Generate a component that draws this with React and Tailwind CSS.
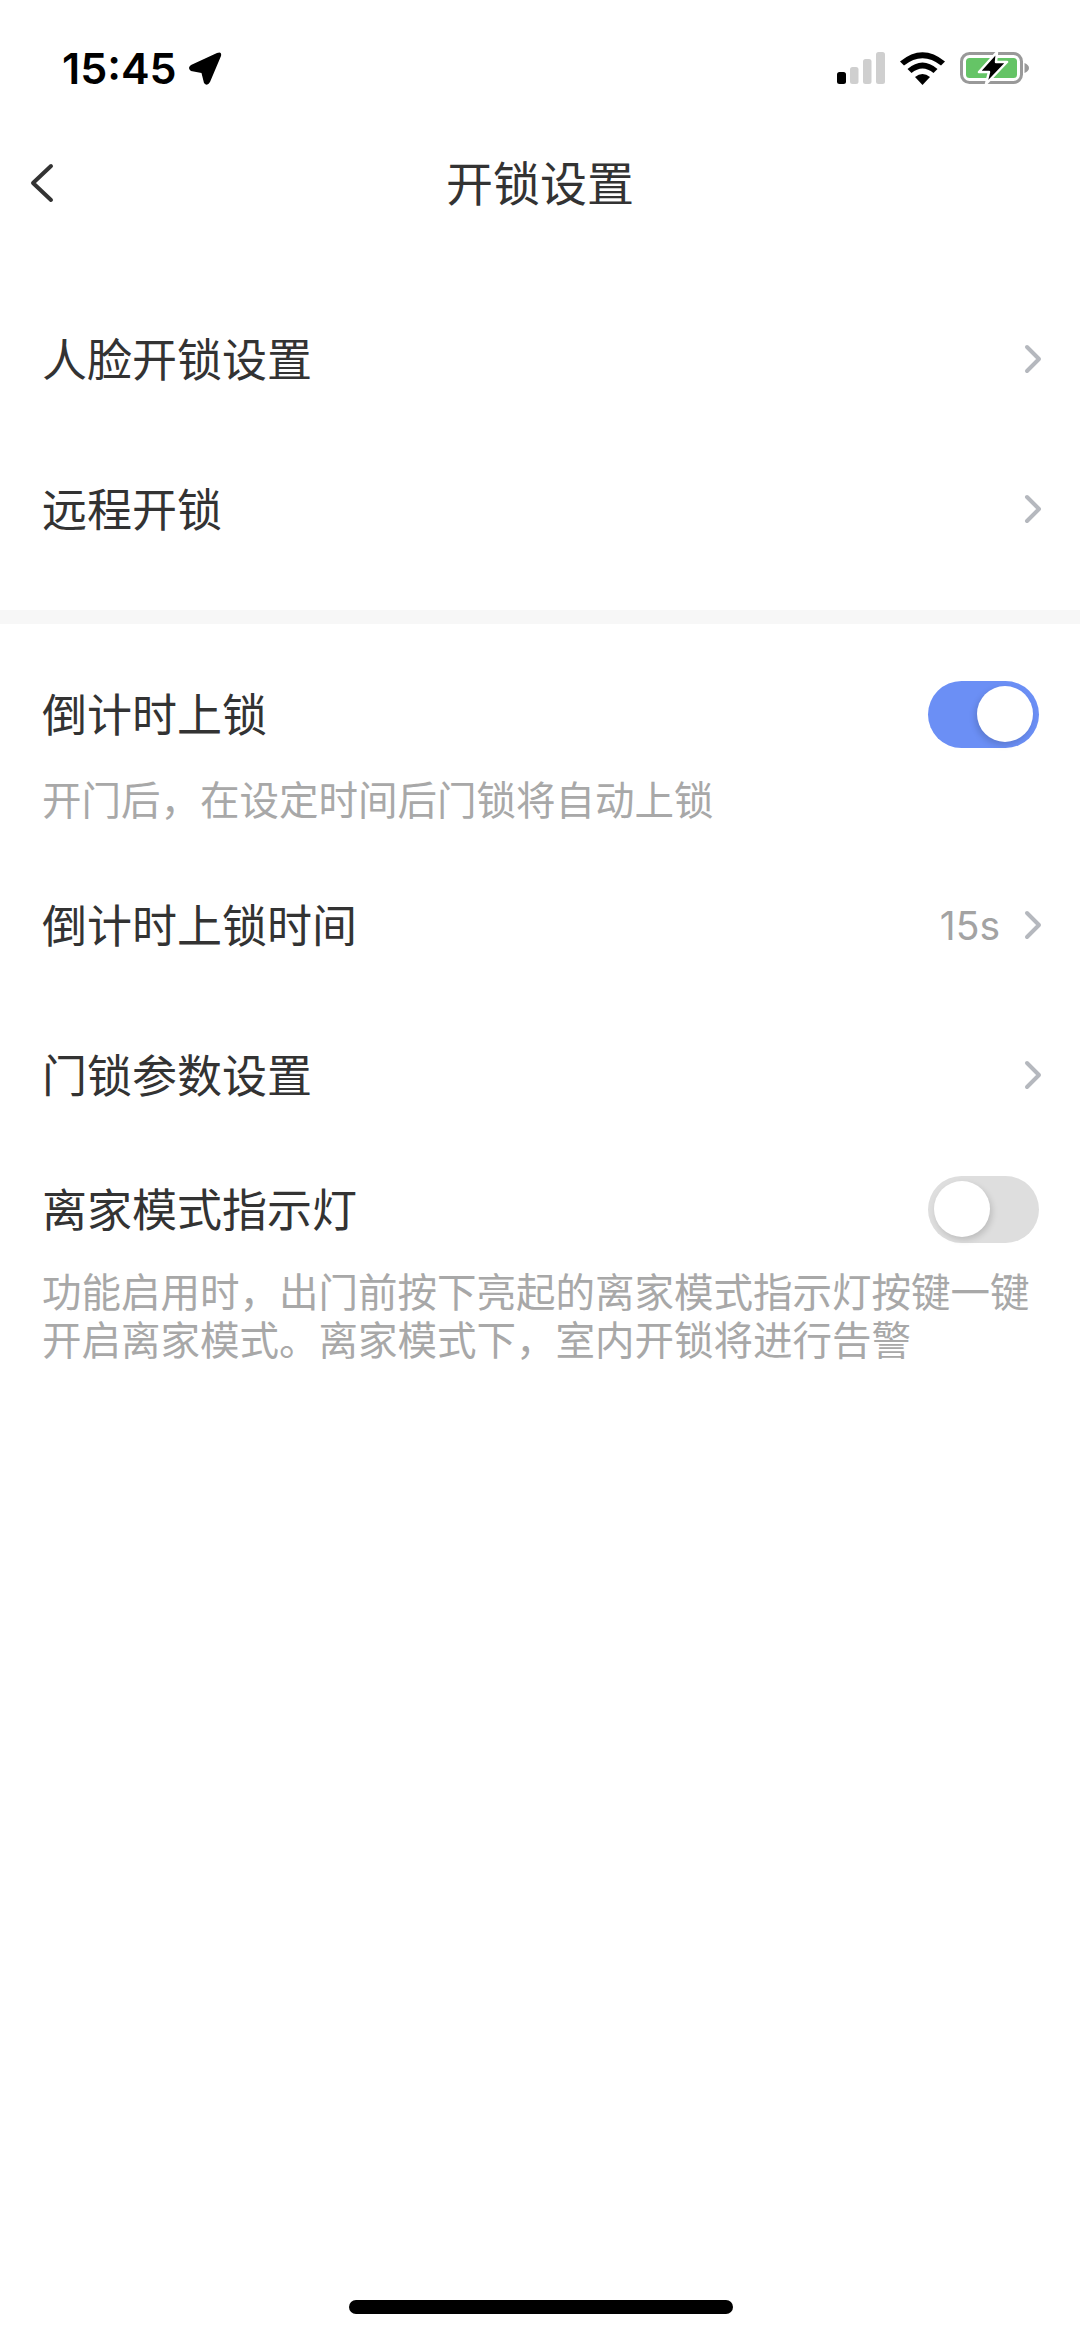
const FONT = "font-['Noto_Sans_CJK_SC','Inter',sans-serif]"

function Chevron() {
  return (
    <svg width="18" height="30" viewBox="0 0 18 30" fill="none" className="shrink-0">
      <path d="M3 3 L15 15 L3 27" stroke="#b5b8be" strokeWidth="4" strokeLinecap="round" strokeLinejoin="round" />
    </svg>
  )
}

function Toggle({ on }) {
  return (
    <div className={`flex items-center w-[111px] h-[67px] rounded-full px-[6px] ${on ? 'justify-end bg-[#6b8ff5]' : 'justify-start bg-[#dedede]'}`}>
      <div className={`w-[56px] h-[56px] rounded-full bg-white ${on ? 'shadow-[-2px_3px_6px_rgba(0,0,0,0.15)]' : 'shadow-[2px_3px_6px_rgba(0,0,0,0.15)]'}`} />
    </div>
  )
}

function LinkRow({ label, value }) {
  return (
    <div className="flex items-center justify-between h-[150px] pl-[42px] pr-[38px]">
      <span className="text-[45px] leading-none text-[#333] pb-[4px]">{label}</span>
      <div className="flex items-center gap-[24px]">
        {value && <span className="text-[39px] leading-none text-[#a3a3a3] font-['Inter',sans-serif]">{value}</span>}
        <Chevron />
      </div>
    </div>
  )
}

function StatusBar() {
  return (
    <div className="flex items-center justify-between h-[132px] pl-[62px] pr-[50px] pt-[4px]">
      <div className="flex items-center gap-[11px]">
        <span className="font-['Inter',sans-serif] text-[43px] font-semibold leading-none text-black">15:45</span>
        <svg width="35" height="35" viewBox="0 0 35 35">
          <path d="M3 14 L29 2 Q34 0 33 5 L22 31 Q19 36 16 32 L13.500 22 L3 20 Q-1 17 3 14 Z" fill="#000" />
        </svg>
      </div>
      <div className="flex items-center gap-[15px]">
        <svg width="48" height="32" viewBox="0 0 48 32">
          <rect x="0" y="20" width="9" height="12" rx="2.500" fill="#000" />
          <rect x="13" y="15" width="8.500" height="17" rx="2.500" fill="#cfcfcf" />
          <rect x="26" y="7" width="8.500" height="25" rx="2.500" fill="#cfcfcf" />
          <rect x="39" y="0" width="9" height="32" rx="2.500" fill="#cfcfcf" />
        </svg>
        <svg width="45" height="33" viewBox="0 0 45 33">
          <path d="M22.500 33 L15 25 Q22.500 19 30 25 Z" fill="#000" />
          <path d="M11.500 21 L7.500 17 Q22.500 4 37.500 17 L33.500 21 Q22.500 12 11.500 21 Z" fill="#000" />
          <path d="M4 13.500 L0 9.500 Q22.500 -9 45 9.500 L41 13.500 Q22.500 -1 4 13.500 Z" fill="#000" />
        </svg>
        <svg width="70" height="34" viewBox="0 0 70 34">
          <rect x="1.500" y="2.500" width="60" height="29" rx="8" fill="none" stroke="#999" strokeWidth="3" />
          <rect x="6" y="7" width="51" height="20" rx="3.500" fill="#65c466" />
          <path d="M64.500 12 Q69 14 69 17 Q69 20 64.500 22 Z" fill="#999" />
          <path d="M37 1 L19 21 L29 21 L26 33 L47 11 L36 11 Z" fill="#000" stroke="#fff" strokeWidth="2.500" strokeLinejoin="round" />
        </svg>
      </div>
    </div>
  )
}

function App() {
  return (
    <div className={`relative min-h-[2337px] w-[1080px] bg-white overflow-hidden ${FONT}`}>
      <StatusBar />

      <div className="relative flex items-center justify-center h-[102px]">
        <svg width="24" height="40" viewBox="0 0 24 40" fill="none" className="absolute left-[30px] top-[31px]">
          <path d="M21 3 L3 20 L21 37" stroke="#333" strokeWidth="4" strokeLinecap="round" strokeLinejoin="round" />
        </svg>
        <span className="text-[47px] leading-none text-[#333] pb-[6px]">开锁设置</span>
      </div>

      <div className="pt-[50px] pb-[26px]">
        <LinkRow label="人脸开锁设置" />
        <LinkRow label="远程开锁" />
      </div>

      <div className="h-[14px] bg-[#f7f7f7]" />

      <div className="flex items-center justify-between h-[100px] mt-[40px] pl-[42px] pr-[41px]">
        <span className="text-[45px] leading-none text-[#333] pb-[4px]">倒计时上锁</span>
        <Toggle on />
      </div>
      <p className="pl-[42px] text-[39.5px] leading-[48px] text-[#a8a8a8] mt-[10px]">开门后，在设定时间后门锁将自动上锁</p>

      <div className="mt-[28px]">
        <LinkRow label="倒计时上锁时间" value="15s" />
        <LinkRow label="门锁参数设置" />
      </div>

      <div className="flex items-center justify-between h-[100px] mt-[9px] pl-[42px] pr-[41px]">
        <span className="text-[45px] leading-none text-[#333] pb-[4px]">离家模式指示灯</span>
        <Toggle />
      </div>
      <p className="pl-[42px] pr-[30px] text-[39.5px] leading-[48px] text-[#a8a8a8] mt-[7px]">功能启用时，出门前按下亮起的离家模式指示灯按键一键开启离家模式。离家模式下，室内开锁将进行告警</p>

      <div className="absolute bottom-[23px] left-[349px] w-[384px] h-[14px] rounded-full bg-black" />
    </div>
  )
}

export default App
